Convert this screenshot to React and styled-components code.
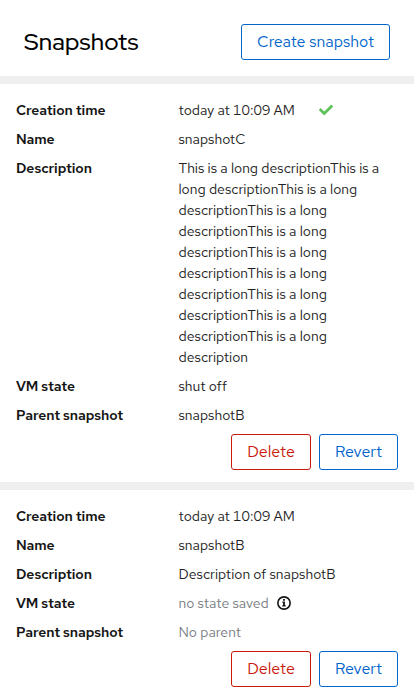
import React from "react";
import styled, { createGlobalStyle } from "styled-components";
import { FaCheck } from "react-icons/fa";

const GlobalStyle = createGlobalStyle`
  *, *::before, *::after { box-sizing: border-box; }
  body {
    margin: 0;
    background: #fff;
    color: #151515;
    font-family: "Red Hat Text", Inter, "Noto Sans", sans-serif;
    font-size: 14px;
    font-weight: 400;
    font-variant-numeric: tabular-nums;
    line-height: 21px;
  }
`;

const Card = styled.main`
  min-height: 699px;
  background: #fff;
`;

const Header = styled.header`
  display: flex;
  align-items: center;
  justify-content: space-between;
  height: 76px;
  padding: 8px 24px 0;
`;

const Title = styled.h2`
  margin: 0;
  color: #000;
  font-family: "Red Hat Display", "Red Hat Text", Inter, sans-serif;
  font-size: 24px;
  font-weight: 500;
  line-height: 36px;
  letter-spacing: 0.2px;
`;

const Button = styled.button`
  flex: none;
  height: 36px;
  padding: 0;
  border: 1px solid currentColor;
  border-radius: 3px;
  background: transparent;
  color: ${(p) => (p.$danger ? "#c9190b" : "#0066cc")};
  font: inherit;
  font-size: 16px;
  line-height: 24px;
  width: ${(p) => p.$width}px;
  white-space: nowrap;
`;

const Snapshot = styled.section`
  padding: 16px 16px 12px;
  border-top: 8px solid #efefef;
`;

const Details = styled.dl`
  display: grid;
  grid-template-columns: 146.5px 1fr;
  gap: 8px 16px;
  margin: 0;
`;

const Term = styled.dt`
  font-weight: 600;
  letter-spacing: -0.09px;
  white-space: nowrap;
`;

const Value = styled.dd`
  display: flex;
  align-items: center;
  margin: 0;
  color: ${(p) => (p.$muted ? "#787c81" : "#222")};
`;

const Actions = styled.div`
  display: flex;
  justify-content: flex-end;
  gap: 8px;
  margin-top: 8px;
`;

const CurrentIcon = styled(FaCheck)`
  width: 14px;
  height: 14px;
  margin: 0 0 2px 24px;
  color: #5fc25b;
`;

const InfoSvg = styled.svg`
  width: 14px;
  height: 14px;
  margin: 0 0 1px 8px;
  color: #151515;
`;

const InfoIcon = () => (
  <InfoSvg viewBox="0 0 14 14" aria-label="More information">
    <circle cx="7" cy="7" r="6.15" fill="none" stroke="currentColor" strokeWidth="1.6" />
    <path fill="currentColor" d="M6.1 3.1h1.8v1.7H6.1zM5.3 5.6h2.6v3.7h.8v1.2H5.3V9.3h.8V6.8h-.8z" />
  </InfoSvg>
);

const LONG = "This is a long description".repeat(10);

const snapshots = [
  {
    name: "snapshotC",
    description: LONG,
    state: "shut off",
    parent: "snapshotB",
    current: true,
  },
  { name: "snapshotB", description: "Description of snapshotB" },
];

export default function App() {
  return (
    <Card>
      <GlobalStyle />
      <Header>
        <Title>Snapshots</Title>
        <Button $width={149}>Create snapshot</Button>
      </Header>
      {snapshots.map((s) => (
        <Snapshot key={s.name}>
          <Details>
            <Term>Creation time</Term>
            <Value>today at 10:09 AM{s.current && <CurrentIcon />}</Value>
            <Term>Name</Term>
            <Value>{s.name}</Value>
            <Term>Description</Term>
            <Value>{s.description}</Value>
            <Term>VM state</Term>
            <Value $muted={!s.state}>
              {s.state || "no state saved"}
              {!s.state && <InfoIcon />}
            </Value>
            <Term>Parent snapshot</Term>
            <Value $muted={!s.parent}>{s.parent || "No parent"}</Value>
          </Details>
          <Actions>
            <Button $danger $width={80}>Delete</Button>
            <Button $width={79}>Revert</Button>
          </Actions>
        </Snapshot>
      ))}
    </Card>
  );
}
